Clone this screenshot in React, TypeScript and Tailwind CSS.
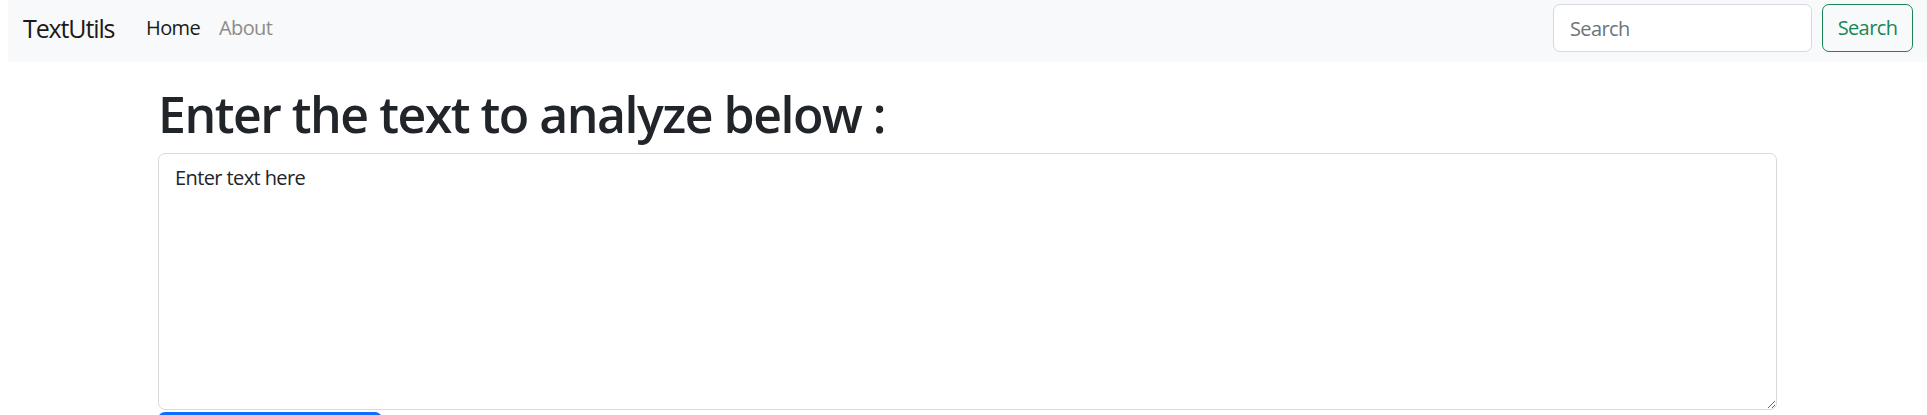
import { useState } from "react";

const Navbar = () => {
  return (
    <nav className="ml-2 h-[62px] bg-[#f8f9fa] flex items-center justify-between pl-[15px] pr-[14px] pb-[6px]">
      <div className="flex items-center">
        <a href="#" className="w-[123px] text-[25px] tracking-[-0.045em] text-[#1a1a1a] leading-none">
          TextUtils
        </a>
        <a href="#" className="w-[73px] text-[20px] tracking-[-0.03em] text-[#1a1a1a] leading-none">
          Home
        </a>
        <a href="#" className="text-[20px] tracking-[-0.03em] text-[#8c8c8c] leading-none">
          About
        </a>
      </div>
      <form className="flex items-center gap-[10px]" onSubmit={(e) => e.preventDefault()}>
        <input
          type="search"
          placeholder="Search"
          className="w-[259px] h-[48px] bg-white border border-[#d6d9dd] rounded-[7px] px-[16px] text-[20px] tracking-[-0.03em] text-[#212529] placeholder:text-[#6c757d] focus:outline-none"
        />
        <button
          type="submit"
          className="w-[91px] h-[48px] border border-[#198754] rounded-[7px] text-[20px] tracking-[-0.03em] text-[#198754] bg-transparent"
        >
          Search
        </button>
      </form>
    </nav>
  );
};

const TextForm = () => {
  const [text, setText] = useState("Enter text here");

  return (
    <div className="ml-[158px] w-[1619px] pt-[22px]">
      <h1 className="text-[50px] leading-[60px] font-semibold tracking-[-0.03em] text-[#212529] mb-[9px]">
        Enter the text to analyze below :
      </h1>
      <textarea
        value={text}
        onChange={(e) => setText(e.target.value)}
        className="block w-full h-[257px] border border-[#d6d9dd] rounded-[7px] px-[16px] py-[9px] text-[20px] leading-[30px] tracking-[-0.03em] text-[#212529] focus:outline-none"
      />
      <button className="mt-[2px] w-[224px] h-[48px] bg-[#0d6efd] text-white text-[20px] tracking-[-0.03em] rounded-[7px]">
        Convert to Uppercase
      </button>
    </div>
  );
};

export default function App() {
  return (
    <div className="h-[415px] overflow-hidden bg-white font-['Open_Sans',sans-serif]">
      <Navbar />
      <TextForm />
    </div>
  );
}
